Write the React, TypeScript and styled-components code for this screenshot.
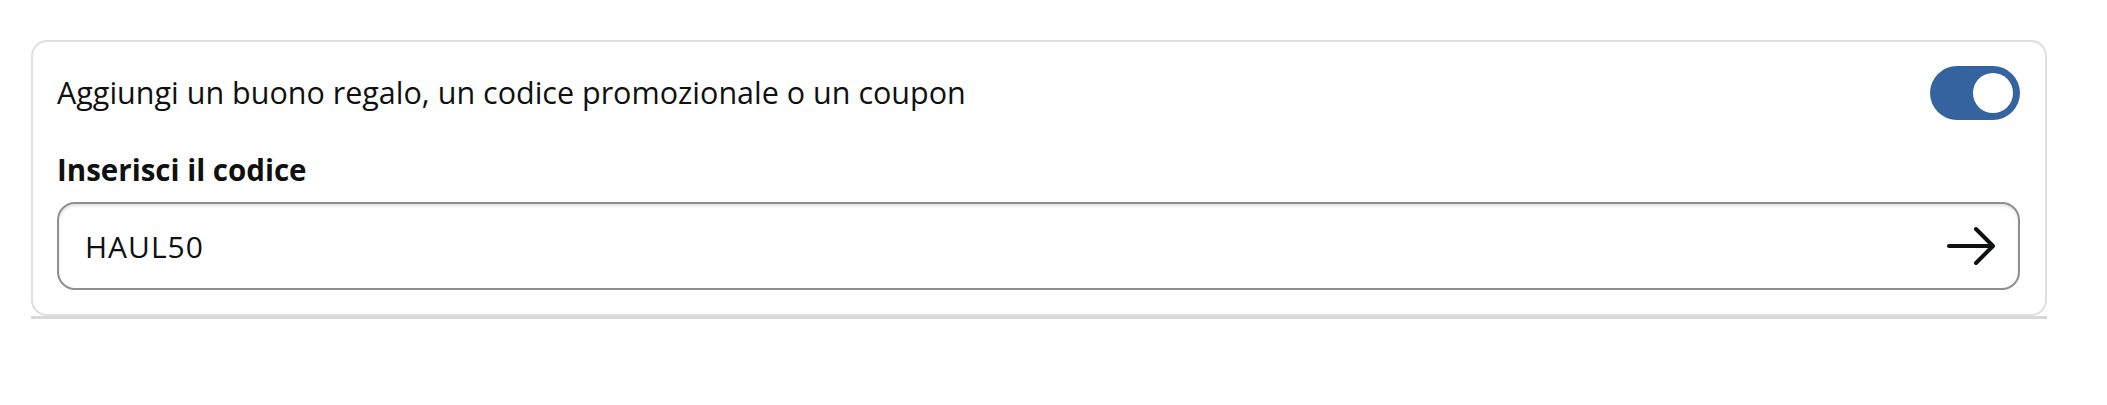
import React, { useState } from "react";
import styled, { createGlobalStyle } from "styled-components";

const GlobalStyle = createGlobalStyle`
  body {
    margin: 0;
    background: #ffffff;
    font-family: "Open Sans", "Liberation Sans", Arial, sans-serif;
    color: #0f1111;
  }
`;

const Page = styled.div`
  padding: 40px 0 0 31px;
`;

const CardWrap = styled.div`
  width: 2016px;
  border-bottom: 3px solid #d5d9d9;
`;

const Card = styled.section`
  border: 2px solid #dcdfdf;
  border-radius: 16px;
  padding: 24px 25px 24px 24px;
  background: #ffffff;
`;

const HeaderRow = styled.div`
  display: flex;
  align-items: center;
  justify-content: space-between;
  height: 54px;
`;

const Title = styled.span`
  font-size: 30.5px;
  line-height: 40px;
  margin-bottom: 3px;
`;

const Toggle = styled.button<{ $on: boolean }>`
  position: relative;
  width: 90px;
  height: 54px;
  border: none;
  border-radius: 27px;
  padding: 0;
  cursor: pointer;
  background: ${(p) => (p.$on ? "#3563a0" : "#c7cbcb")};

  &::after {
    content: "";
    position: absolute;
    top: 7px;
    left: ${(p) => (p.$on ? "43px" : "7px")};
    width: 40px;
    height: 40px;
    border-radius: 50%;
    background: #ffffff;
  }
`;

const Label = styled.label`
  display: block;
  margin-top: 30px;
  font-size: 29.5px;
  font-weight: 700;
  line-height: 40px;
`;

const Field = styled.div`
  display: flex;
  align-items: center;
  height: 88px;
  margin-top: 12px;
  border: 2px solid #8d9090;
  border-radius: 18px;
  box-shadow: inset 0 2px 3px rgba(15, 17, 17, 0.12);
  padding: 0 22px 0 26px;
  box-sizing: border-box;
`;

const CodeInput = styled.input`
  flex: 1;
  border: none;
  outline: none;
  background: transparent;
  font-family: inherit;
  font-size: 30px;
  letter-spacing: 1px;
  color: #0f1111;
  padding: 0;
`;

const SubmitButton = styled.button`
  display: flex;
  border: none;
  background: none;
  padding: 0;
  cursor: pointer;
`;

const App = () => {
  const [on, setOn] = useState(true);
  const [code, setCode] = useState("HAUL50");

  return (
    <>
      <GlobalStyle />
      <Page>
        <CardWrap>
          <Card>
            <HeaderRow>
              <Title>Aggiungi un buono regalo, un codice promozionale o un coupon</Title>
              <Toggle $on={on} onClick={() => setOn(!on)} aria-label="toggle" />
            </HeaderRow>
            <Label htmlFor="code">Inserisci il codice</Label>
            <Field>
              <CodeInput id="code" value={code} onChange={(e) => setCode(e.target.value)} />
              <SubmitButton aria-label="applica">
                <svg width="50" height="40" viewBox="0 0 50 40" fill="none">
                  <path d="M3 20H46" stroke="#0f1111" strokeWidth="4" strokeLinecap="round" />
                  <path
                    d="M30 3L47 20L30 37"
                    stroke="#0f1111"
                    strokeWidth="4"
                    strokeLinecap="round"
                    strokeLinejoin="round"
                  />
                </svg>
              </SubmitButton>
            </Field>
          </Card>
        </CardWrap>
      </Page>
    </>
  );
};

export default App;
